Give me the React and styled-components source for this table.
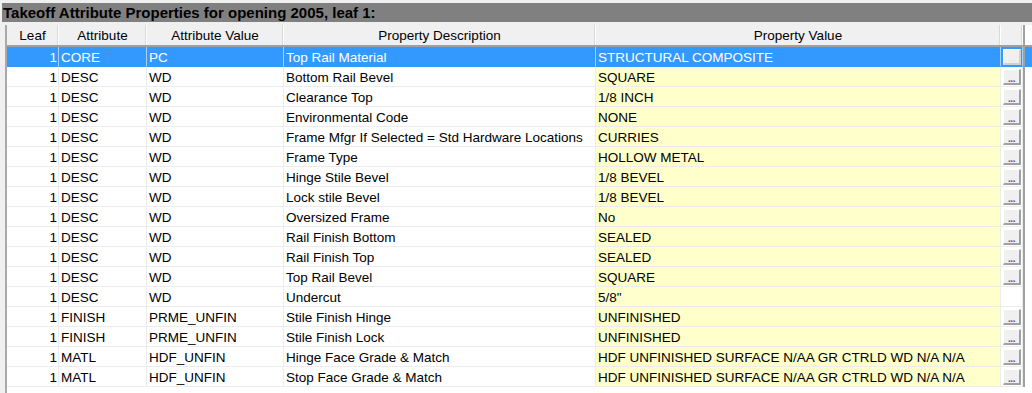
import styled, { createGlobalStyle } from 'styled-components'

const GlobalStyle = createGlobalStyle`
    html, body {
        margin: 0;
        padding: 0;
        background: #ffffff;
    }
    body {
        font-family: "Liberation Sans", Arial, sans-serif;
    }
`

const COLS = '52px 88px 137px 312px 405px 22px 1fr'

const Panel = styled.div`
    width: 1032px;
    height: 393px;
    background: #f0f0f0;
    padding: 3px 0 0 2px;
    box-sizing: border-box;
    display: flex;
    flex-direction: column;
    overflow: hidden;
`

const TitleBar = styled.div`
    height: 19px;
    background: #808080;
    color: #000;
    font-family: "Liberation Sans", Arial, sans-serif;
    font-weight: 700;
    font-size: 15px;
    line-height: 19px;
    padding-left: 1px;
    white-space: nowrap;
    overflow: hidden;
`

const GridWrap = styled.div`
    flex: 1;
    margin: 3px 0 0 3px;
    border-left: 2px solid #a9a9a9;
    background: #ffffff;
`

const HeaderRow = styled.div`
    display: grid;
    grid-template-columns: ${COLS};
    height: 20px;
    background: #f0f0f0;
    border-bottom: 2px solid #a0a0a0;
`

const HeadCell = styled.div`
    font-size: 13.5px;
    line-height: 19px;
    padding-top: 1px;
    color: #000;
    text-align: center;
    border-right: 1px solid #ffffff;
    box-shadow: inset -1px 0 0 #d9d9d9;
    white-space: nowrap;
    overflow: hidden;
`

const Tail = styled.div`
    border-left: 2px solid #a0a0a0;
    background: ${p => (p.$selected ? '#3399ff' : '#ffffff')};
`

const Row = styled.div`
    display: grid;
    grid-template-columns: ${COLS};
    height: 20px;
`

const Cell = styled.div`
    font-size: 13.5px;
    line-height: 18px;
    height: 20px;
    padding: 2px 0 0 2px;
    box-sizing: border-box;
    white-space: nowrap;
    overflow: hidden;
    text-align: ${p => (p.$right ? 'right' : 'left')};
    padding-right: ${p => (p.$right ? '1px' : '0')};
    color: ${p => (p.$selected ? '#ffffff' : '#000000')};
    background: ${p => (p.$selected ? '#3399ff' : p.$yellow ? '#ffffcc' : '#ffffff')};
    border-right: 1px solid ${p => (p.$selected ? '#a6d0ff' : '#ececec')};
    border-bottom: 1px solid ${p => (p.$selected ? '#3399ff' : '#ececec')};
`

const BtnCell = styled.div`
    display: flex;
    align-items: center;
    justify-content: flex-end;
    padding-right: 1px;
    background: ${p => (p.$selected ? '#3399ff' : '#ffffff')};
    border-right: 1px solid ${p => (p.$selected ? '#a6d0ff' : '#ececec')};
    border-bottom: 1px solid ${p => (p.$selected ? '#3399ff' : '#ececec')};
`

const DotButton = styled.div`
    width: 18px;
    height: 16px;
    box-sizing: border-box;
    background: #f0f0f0;
    border-top: 1px solid #ffffff;
    border-left: 1px solid #ffffff;
    border-right: 2px solid ${p => (p.$selected ? '#d0d0d0' : '#a0a0a0')};
    border-bottom: 2px solid ${p => (p.$selected ? '#d0d0d0' : '#a0a0a0')};
    display: flex;
    align-items: flex-end;
    justify-content: center;
    font-family: "Liberation Sans", Arial, sans-serif;
    font-size: 10px;
    line-height: 9px;
    font-weight: bold;
    letter-spacing: -0.5px;
    color: ${p => (p.$selected ? '#e8e8e8' : '#7a4a8a')};
`

const headers = ['Leaf', 'Attribute', 'Attribute Value', 'Property Description', 'Property Value', '']

const rows = [
    ['CORE', 'PC', 'Top Rail Material', 'STRUCTURAL COMPOSITE'],
    ['DESC', 'WD', 'Bottom Rail Bevel', 'SQUARE'],
    ['DESC', 'WD', 'Clearance Top', '1/8 INCH'],
    ['DESC', 'WD', 'Environmental Code', 'NONE'],
    ['DESC', 'WD', 'Frame Mfgr If Selected = Std Hardware Locations', 'CURRIES'],
    ['DESC', 'WD', 'Frame Type', 'HOLLOW METAL'],
    ['DESC', 'WD', 'Hinge Stile Bevel', '1/8 BEVEL'],
    ['DESC', 'WD', 'Lock stile Bevel', '1/8 BEVEL'],
    ['DESC', 'WD', 'Oversized Frame', 'No'],
    ['DESC', 'WD', 'Rail Finish Bottom', 'SEALED'],
    ['DESC', 'WD', 'Rail Finish Top', 'SEALED'],
    ['DESC', 'WD', 'Top Rail Bevel', 'SQUARE'],
    ['DESC', 'WD', 'Undercut', '5/8"', true],
    ['FINISH', 'PRME_UNFIN', 'Stile Finish Hinge', 'UNFINISHED'],
    ['FINISH', 'PRME_UNFIN', 'Stile Finish Lock', 'UNFINISHED'],
    ['MATL', 'HDF_UNFIN', 'Hinge Face Grade & Match', 'HDF UNFINISHED SURFACE N/AA GR CTRLD WD N/A N/A'],
    ['MATL', 'HDF_UNFIN', 'Stop Face Grade & Match', 'HDF UNFINISHED SURFACE N/AA GR CTRLD WD N/A N/A'],
]

export default function App() {
    return (
        <>
            <GlobalStyle />
            <Panel>
                <TitleBar>Takeoff Attribute Properties for opening 2005, leaf 1:</TitleBar>
                <GridWrap>
                    <HeaderRow>
                        {headers.map((h, i) => <HeadCell key={i}>{h}</HeadCell>)}
                        <Tail />
                    </HeaderRow>
                    {rows.map(([attr, val, desc, prop, noBtn], i) => {
                        const sel = i === 0
                        return (
                            <Row key={i}>
                                <Cell $right $selected={sel}>1</Cell>
                                <Cell $selected={sel}>{attr}</Cell>
                                <Cell $selected={sel}>{val}</Cell>
                                <Cell $selected={sel}>{desc}</Cell>
                                <Cell $selected={sel} $yellow>{prop}</Cell>
                                <BtnCell $selected={sel}>
                                    {!noBtn && <DotButton $selected={sel}>...</DotButton>}
                                </BtnCell>
                                <Tail $selected={sel} />
                            </Row>
                        )
                    })}
                </GridWrap>
            </Panel>
        </>
    )
}
